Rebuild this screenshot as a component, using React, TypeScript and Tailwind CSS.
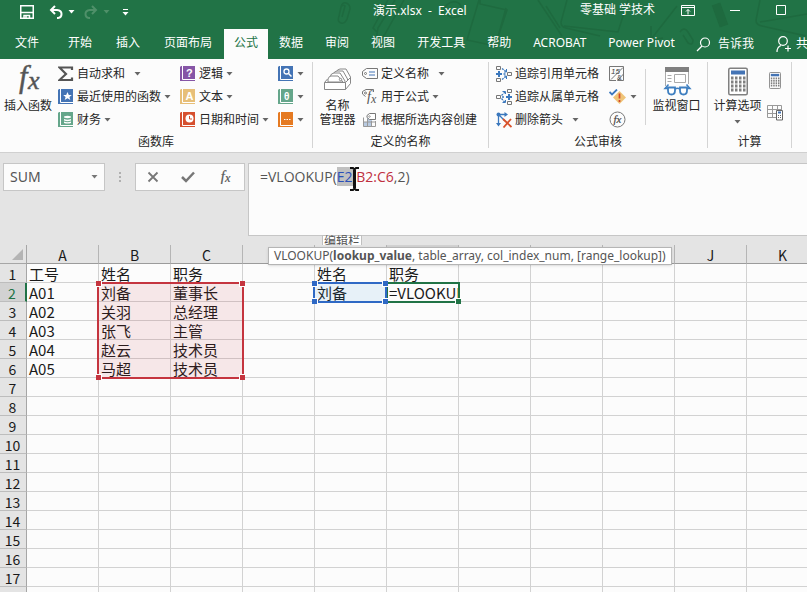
import React from "react";

const tabs = ["文件", "开始", "插入", "页面布局", "公式", "数据", "审阅", "视图", "开发工具", "帮助", "ACROBAT", "Power Pivot"];
const columns = ["A", "B", "C", "D", "E", "F", "G", "H", "I", "J", "K"];

// Cell contents, one array per sheet row
const sheet: Record<number, string[]> = {
  1: ["工号", "姓名", "职务", "", "姓名", "职务"],
  2: ["A01", "刘备", "董事长", "", "刘备", "=VLOOKUP(E2,B2:C6,2)"],
  3: ["A02", "关羽", "总经理"],
  4: ["A03", "张飞", "主管"],
  5: ["A04", "赵云", "技术员"],
  6: ["A05", "马超", "技术员"],
};

/* ---------- small drawing helpers ---------- */

const Arrow = ({ className = "" }: { className?: string }) => (
  <svg width="7" height="4" viewBox="0 0 7 4" className={"shrink-0 " + className}>
    <path d="M0.5 0h6L3.5 3.5z" fill="currentColor" />
  </svg>
);

const Fx = ({ size, className = "" }: { size: number; className?: string }) => (
  <svg width={size} height={size} viewBox="0 0 30 30" className={"overflow-visible " + className}>
    <text x="7" y="22" fontSize="27" fontStyle="italic" fontFamily="Liberation Serif, serif" fill="currentColor" stroke="currentColor" strokeWidth="0.4">f</text>
    <text x="15" y="24" fontSize="23" fontStyle="italic" fontFamily="Liberation Serif, serif" fill="currentColor" stroke="currentColor" strokeWidth="0.4">x</text>
  </svg>
);

const Book = ({ color, children }: { color: string; children: React.ReactNode }) => (
  <svg width="16" height="16" viewBox="0 0 16 16" className="shrink-0">
    <path d="M1 0h14v15H0V1z" fill={color} />
    <path d="M2.500 0v13.500H15" fill="none" stroke="#fff" />
    {children}
  </svg>
);

const Sigma = () => (
  <svg width="16" height="16" viewBox="0 0 16 16" className="shrink-0">
    <path d="M14 4V1.5H1.5L8 8l-6.5 6H14v-2.5" fill="none" stroke="#555" strokeWidth="2.2" />
  </svg>
);

const NameManager = () => (
  <svg width="30" height="26" viewBox="0 0 30 26" fill="#fff" stroke="#888" strokeWidth="1">
    <path d="M13 6q1-4 4-4h6l4.500 8v6" />
    <path d="M10 8q1-4 4-4h6l4.500 8v5" />
    <path d="M7 10q1-4 4-4h6l5 8v3H7z" />
    <path d="M5 15v-3q1-3 3-3h7l5 6z" />
    <circle cx="17.500" cy="12.500" r="1.200" />
    <path d="m1.500 15.500 3-3.500M22.500 22.500l5-6v-6l-5 5z" />
    <path d="M1.500 15.500h21v7h-21z" />
  </svg>
);

const DefineName = () => (
  <svg width="16" height="16" viewBox="0 0 16 16" fill="none" stroke="#777" className="shrink-0">
    <path d="M4.500 2.500h11v10h-11L.500 9.500v-4z" />
    <circle cx="3.500" cy="7.500" r="1" />
    <path d="M7 6h6M7 9h6" stroke="#4474b5" strokeWidth="1.200" />
  </svg>
);

const UseInFormula = () => (
  <svg width="16" height="16" viewBox="0 0 16 16" fill="none" stroke="#777" className="shrink-0 overflow-visible">
    <path d="M3.500 7.500.500 5V2.500L4 .500h7.500V3" />
    <circle cx="3.500" cy="4" r="1" />
    <text x="5" y="12" fontSize="14" fontStyle="italic" fontFamily="Liberation Serif, serif" fill="#555" stroke="none">f</text>
    <text x="9" y="14" fontSize="12" fontStyle="italic" fontFamily="Liberation Serif, serif" fill="#555" stroke="none">x</text>
  </svg>
);

const FromSelection = () => (
  <svg width="16" height="16" viewBox="0 0 16 16" fill="none" stroke="#999" className="shrink-0">
    <path d="M5 6h5v9H5zM1 10h4v4.500H1z" fill="#b9cbe2" stroke="none" />
    <path d="M1.500 5.500v9h12V9M1.500 10h12M5.500 7v7.500M9.500 9v5.500" />
    <path d="M7.500 1.500h6v6h-6L5 5.500V3.500z" fill="#fff" stroke="#777" />
    <circle cx="7.500" cy="4.500" r=".8" />
  </svg>
);

const TracePrecedents = () => (
  <svg width="16" height="16" viewBox="0 0 16 16" fill="none" stroke="#777" className="shrink-0">
    <path d="M.500.500h4v3h-4zM.500 12.500h4v3h-4zM11.500 6.500h4v3h-4z" />
    <path d="M0 8h6M3 5v6" stroke="#3b78bd" strokeWidth="2" />
    <path d="M6 2.500 10 5.500M6 13.500l4-3M7.500 8h3" stroke="#3b78bd" strokeDasharray="2 1" strokeWidth="1.300" />
    <path d="M10.500 3v3H8M10.500 13v-3H8" stroke="#3b78bd" />
  </svg>
);

const TraceDependents = () => (
  <svg width="16" height="16" viewBox="0 0 16 16" fill="none" stroke="#777" className="shrink-0">
    <path d="M.500 6.500h4v3h-4zM11.500.500h4v3h-4zM11.500 12.500h4v3h-4z" />
    <path d="M10 8h6M13 5v6" stroke="#3b78bd" strokeWidth="2" />
    <path d="M5.500 6.500 9 3M5.500 9.500l3.500 4M6 8h3" stroke="#3b78bd" strokeDasharray="2 1" strokeWidth="1.300" />
    <path d="M6.500 2.500h3V5M6.500 13.500h3V11" stroke="#3b78bd" />
  </svg>
);

const RemoveArrows = () => (
  <svg width="16" height="16" viewBox="0 0 16 16" fill="none" className="shrink-0">
    <path d="M2.500 2.500v10M2.500 2.500H10M2.500 2.500 9 9" stroke="#3b78bd" strokeWidth="1.300" />
    <path d="M0 11h5l-2.500 3.500zM8.500 0v5L12 2.500z" fill="#3b78bd" />
    <circle cx="2.500" cy="2.500" r="2" fill="#3b78bd" />
    <path d="m7 7 8.500 8M15 7l-7.500 8.500" stroke="#d9532c" strokeWidth="1.800" />
  </svg>
);

const ShowFormulas = () => (
  <svg width="16" height="16" viewBox="0 0 16 16" fill="none" stroke="#777">
    <path d="M7 14.500H.500V.500h14V14M2 13.500 14 1.500M14.500 8v6.500h-6z" />
    <text x="2" y="7.500" fontSize="8" fontStyle="italic" fontFamily="Liberation Sans" fill="#444" stroke="none">15</text>
    <text x="8" y="13.500" fontSize="7" fontFamily="Liberation Sans" fill="#444" stroke="none">&amp;</text>
  </svg>
);

const ErrorCheck = () => (
  <svg width="18" height="16" viewBox="0 0 18 16" fill="none">
    <path d="M10.500 2 17 8.500 10.500 15 4 8.500z" fill="#efc478" />
    <path d="M10.500 4.500v5M10.500 11v2" stroke="#d2452a" strokeWidth="1.700" />
    <path d="M.500 3 3 5.500 8 .500" stroke="#3b78bd" strokeWidth="1.800" />
  </svg>
);

const Evaluate = () => (
  <svg width="17" height="17" viewBox="0 0 17 17" fill="none" stroke="#777">
    <circle cx="8.500" cy="8.500" r="7.500" />
    <text x="4.500" y="11.500" fontSize="11" fontStyle="italic" fontFamily="Liberation Serif, serif" fill="#444" stroke="#444" strokeWidth="0.200">fx</text>
  </svg>
);

const WatchWindow = () => (
  <svg width="30" height="30" viewBox="0 0 30 30" fill="none" stroke="#aaa">
    <path d="M3.500 20V1.500h23V18" fill="#fff" />
    <path d="M3 1h24v5H3z" fill="#808080" stroke="none" />
    <path d="M12.500 8.500h11v8h-11zM5.500 9.500h4M5.500 12.500h4M5.500 15.500h4" />
    <g stroke="#3f7fc0" strokeWidth="1.800">
      <path d="M6 21.500h7v3q0 4-3.500 4T6 24.500zM18 21.500h7v3q0 4-3.500 4T18 24.500z" fill="#fff" />
      <path d="M13 23q2.500-1.500 5 0M6 22.500H3l3.500-4M25 22.500h3l-3.500-4" strokeWidth="1.500" />
    </g>
  </svg>
);

const Calculator = ({ width, height }: { width: number; height: number }) => (
  <svg width={width} height={height} viewBox="0 0 20 28" fill="none">
    <rect x="0.750" y="0.750" width="18.500" height="26.500" rx="1.500" fill="#fff" stroke="#808080" strokeWidth="1.500" />
    <rect x="3" y="3" width="14" height="4" fill="#4474b5" />
    {[9, 13, 17, 21].map((y) =>
      [3, 7, 11, 15].map((x) => <rect key={x + "-" + y} x={x} y={y} width="2.500" height="3" fill="#808080" />)
    )}
  </svg>
);

const CalcSheet = () => (
  <svg width="16" height="16" viewBox="0 0 16 16" fill="none" stroke="#999">
    <path d="M.500.500h14v12H.500zM.500 4.500h14M.500 8.500h9M5.500.500v12M10.500.500v12" />
    <path d="M9.500 5.500h6v9.500h-6z" fill="#fff" stroke="#666" />
    <path d="M11 7.500h3" stroke="#4474b5" strokeWidth="2" />
    <path d="M11 10.500h3M11 12.500h3" strokeDasharray="1 1" stroke="#666" />
  </svg>
);

// Faint stationery pattern behind the title bar
const Doodles = () => (
  <svg className="absolute right-0 top-0" width="480" height="59" viewBox="327 0 480 59" fill="none" stroke="#1e6a3f" strokeWidth="1.500">
    <path d="M341 7q1-5 5-4t4 6l-3 10q-2 5-6 4t-2-7l2-9q2-3 4-1l-3 11M395 0l-17 28-3 18 10-12 19-34M388 0l-15 28 4 4" />
    <path d="M480 0v4l27 6-12 36-28-6 12-40M506 8l-10 36-4-1M442 12q6-12 14-10t4 14l-8 2zM538 0l24 36M546 6l14 22" />
    <path d="m567 0-6 22q0 5 5 6l34 8M564 26l54 6 10-32M652 38l25-32M651 26v14l12-2M680 32q4-6 8 0l5 8q0 6-5 3l-5-8M760 0l-4 20q0 5 6 6l44 10M760 22l47-8" />
    <path d="m716 4 8 22" strokeWidth="9" />
  </svg>
);

/* ---------- ribbon pieces ---------- */

interface CommandProps {
  icon: React.ReactNode;
  label?: string;
  arrow?: boolean;
  wide?: boolean;
  title?: string;
}

const Command = ({ icon, label, arrow, wide, title }: CommandProps) => (
  <button title={title} className="flex h-[23px] items-center gap-[3px] whitespace-nowrap">
    {icon}
    {label && <span>{label}</span>}
    {arrow && <Arrow className={wide ? "ml-1.5 text-[#666]" : "text-[#666]"} />}
  </button>
);

const Group = ({ name, className, children }: { name: string; className: string; children: React.ReactNode }) => (
  <section aria-label={name} className={"flex shrink-0 flex-col " + className}>
    <div className="flex h-[71px] items-start">{children}</div>
    <div className="text-center leading-5">{name}</div>
  </section>
);

const Divider = () => <div className="h-[86px] w-px shrink-0 bg-[#d4d4d4]" />;

const Handles = ({ color }: { color: string }) => (
  <>
    <i className={"absolute -left-[3px] -top-[3px] size-[6px] border-b border-r border-white " + color} />
    <i className={"absolute -right-[3px] -top-[3px] size-[6px] border-b border-l border-white " + color} />
    <i className={"absolute -bottom-[3px] -left-[3px] size-[6px] border-r border-t border-white " + color} />
    <i className={"absolute -bottom-[3px] -right-[3px] size-[6px] border-l border-t border-white " + color} />
  </>
);

const tabClass = (tab: string, index: number) => {
  if (tab === "公式") return "bg-[#fcfcfc] px-2.5 text-[#217346]";
  if (tab === "文件") return "mr-[5px] px-3";
  return index < 4 ? "px-3" : "px-[11px]";
};

const Header = () => (
  <header className="relative h-[59px] overflow-hidden bg-[#217346] text-white">
    <Doodles />
    <div className="relative flex h-[29px] items-start whitespace-nowrap">
      <div className="flex h-6 w-[373px] shrink-0 items-center pl-5">
        <button title="保存">
          <svg width="14" height="14" viewBox="0 0 14 14" fill="none" stroke="#fff" strokeWidth="1.500">
            <path d="M.750.750h12.500v12.500H.750zM1 7.500h12M4 13v-2.500h5.500V13M6 11v2" />
          </svg>
        </button>
        <button title="撤消" className="ml-[15px] flex items-center gap-[5px]">
          <svg width="14" height="14" viewBox="0 0 14 14" fill="none" stroke="#fff" strokeWidth="2">
            <path d="M6 1 2 5l4 4M2 5h6q4.500.500 4.500 4T9 13H8" />
          </svg>
          <Arrow />
        </button>
        <button title="恢复" className="ml-[9px] flex items-center gap-[5px] text-[#4f9069]">
          <svg width="14" height="14" viewBox="0 0 14 14" fill="none" stroke="currentColor" strokeWidth="2">
            <path d="m8 1 4 4-4 4M12 5H6q-4.500.500-4.500 4T5 13h1" />
          </svg>
          <Arrow />
        </button>
        <button title="自定义快速访问工具栏" className="ml-3">
          <svg width="7" height="7" viewBox="0 0 7 7" fill="#fff">
            <path d="M1 0h5v1H1zM.500 3h6l-3 3.500z" />
          </svg>
        </button>
      </div>
      <h1 className="whitespace-pre leading-[22px]">演示.xlsx  -  Excel</h1>
      <div className="ml-auto flex h-5 items-center pr-[21px]">
        <span>零基础 学技术</span>
        <button title="功能区显示选项" className="ml-[26px]">
          <svg width="14" height="11" viewBox="0 0 14 11" fill="none" stroke="#fff">
            <path d="M.500.500h13v10H.500zM1 2.500h12M7 9.500V4.500M5 6.500l2-2 2 2" />
          </svg>
        </button>
        <button title="最小化" className="ml-[35px]">
          <svg width="10" height="10" viewBox="0 0 10 10" stroke="#fff"><path d="M0 5.500h10" /></svg>
        </button>
        <button title="最大化" className="ml-9">
          <svg width="10" height="10" viewBox="0 0 10 10" fill="none" stroke="#fff"><path d="M.500.500h9v9h-9z" /></svg>
        </button>
      </div>
    </div>
    <nav className="relative flex h-[30px] items-stretch whitespace-nowrap pl-[3px]">
      {tabs.map((tab, i) => (
        <button key={tab} className={"shrink-0 pb-0.5 " + tabClass(tab, i)}>
          {tab}
        </button>
      ))}
      <button className="ml-2.5 flex shrink-0 items-center gap-[7px]">
        <svg width="15" height="15" viewBox="0 0 15 15" fill="none" stroke="#fff" strokeWidth="1.200">
          <circle cx="9" cy="5.500" r="4.500" />
          <path d="m6 9-5 5" />
        </svg>
        告诉我
      </button>
      <button className="ml-[22px] flex shrink-0 items-center gap-1">
        <svg width="16" height="16" viewBox="0 0 16 16" fill="none" stroke="#fff" strokeWidth="1.200">
          <circle cx="7" cy="5" r="4.300" />
          <path d="M1 16q0-5 4-6.500M12 9.500v6M9 12.500h6" />
        </svg>
        共享
      </button>
    </nav>
  </header>
);

const Ribbon = () => (
  <div className="flex h-[94px] overflow-hidden whitespace-nowrap border-b border-[#d0d0d0] bg-[#fcfcfc] pt-[3px] text-[#262626]">
    <Group name="函数库" className="w-[312px]">
      <button className="flex w-14 shrink-0 flex-col items-center">
        <Fx size={34} className="text-[#555]" />
        <span className="leading-5">插入函数</span>
      </button>
      <div className="w-[122px] shrink-0 pl-0.5">
        <Command icon={<Sigma />} label="自动求和" arrow wide />
        <Command
          icon={<Book color="#4474b5"><path d="m9.500 3 1.300 3h3l-2.400 2 .900 3-2.800-1.800L6.700 11l.900-3-2.400-2h3z" fill="#fff" /></Book>}
          label="最近使用的函数"
          arrow
        />
        <Command
          icon={<Book color="#65a68b"><path d="M6 4.500q3.500-1.500 7 0v1q-3.500 1.500-7 0zM6 7q3.500 1.500 7 0v1.500q-3.500 1.500-7 0zM6 9.500q3.500 1.500 7 0V11q-3.500 1-7 0z" fill="#fff" /></Book>}
          label="财务"
          arrow
        />
      </div>
      <div className="w-[98px] shrink-0 pl-0.5">
        <Command
          icon={<Book color="#8655a6"><text x="6" y="11" fontSize="11" fontWeight="700" fontFamily="Liberation Sans" fill="#fff">?</text></Book>}
          label="逻辑"
          arrow
        />
        <Command
          icon={<Book color="#e7bf79"><text x="5.500" y="11" fontSize="11" fontWeight="700" fontFamily="Liberation Sans" fill="#fff">A</text></Book>}
          label="文本"
          arrow
        />
        <Command
          icon={<Book color="#d6502f"><circle cx="9.500" cy="6.500" r="4" fill="#fff" /><path d="M9.500 4v3h2.500" stroke="#d6502f" fill="none" /></Book>}
          label="日期和时间"
          arrow
        />
      </div>
      <div className="pl-0.5">
        <Command title="查找与引用" icon={<Book color="#4474b5"><circle cx="8.500" cy="5.500" r="2.500" fill="none" stroke="#fff" strokeWidth="1.300" /><path d="m10.500 7.500 3 3" stroke="#fff" strokeWidth="1.500" /></Book>} arrow />
        <Command title="数学和三角函数" icon={<Book color="#65a68b"><text x="6" y="10.500" fontSize="10" fontWeight="700" fontFamily="Liberation Sans" fill="#fff">θ</text></Book>} arrow />
        <Command title="其他函数" icon={<Book color="#e57a22"><path d="M6 7.500h1.500M8.500 7.500H10M11 7.500h1.500" stroke="#fff" /></Book>} arrow />
      </div>
    </Group>
    <Divider />
    <Group name="定义的名称" className="w-[175px]">
      <button className="flex w-[49px] shrink-0 flex-col items-center pt-[5px] leading-[14px]">
        <NameManager />
        <span className="mt-1.5">名称</span>
        <span>管理器</span>
      </button>
      <div>
        <Command icon={<DefineName />} label="定义名称" arrow wide />
        <Command icon={<UseInFormula />} label="用于公式" arrow />
        <Command icon={<FromSelection />} label="根据所选内容创建" />
      </div>
    </Group>
    <Divider />
    <Group name="公式审核" className="w-[218px]">
      <div className="w-[120px] shrink-0 pl-[7px]">
        <Command icon={<TracePrecedents />} label="追踪引用单元格" />
        <Command icon={<TraceDependents />} label="追踪从属单元格" />
        <Command icon={<RemoveArrows />} label="删除箭头" arrow wide />
      </div>
      <div className="w-9 shrink-0">
        <Command title="显示公式" icon={<ShowFormulas />} />
        <Command title="错误检查" icon={<ErrorCheck />} arrow />
        <Command title="公式求值" icon={<Evaluate />} />
      </div>
      <div className="mt-[7px] h-14 w-px shrink-0 bg-[#d4d4d4]" />
      <button className="flex w-[61px] shrink-0 flex-col items-center pt-1">
        <WatchWindow />
        <span className="leading-5">监视窗口</span>
      </button>
    </Group>
    <Divider />
    <Group name="计算" className="w-[83px]">
      <button className="flex w-[59px] shrink-0 flex-col items-center pt-[5px]">
        <Calculator width={20} height={29} />
        <span className="leading-5">计算选项</span>
        <Arrow className="mt-1 text-[#666]" />
      </button>
      <div className="flex flex-col items-center gap-4 pt-[10px]">
        <button title="开始计算" className="block"><Calculator width={12} height={17} /></button>
        <button title="计算工作表" className="block"><CalcSheet /></button>
      </div>
    </Group>
    <Divider />
  </div>
);

const FormulaBar = () => (
  <div className="flex items-start pl-[3px] pt-[10px] text-[#555]">
    <div className="flex h-7 w-[102px] shrink-0 items-center border border-[#c6c6c6] bg-[#fcfcfc] pr-1.5">
      <input aria-label="名称框" defaultValue="SUM" className="w-full min-w-0 bg-transparent pl-1.5 text-sm outline-none" />
      <button title="名称列表"><Arrow className="text-[#777]" /></button>
    </div>
    <svg width="30" height="28" viewBox="0 0 30 28" className="shrink-0" fill="#b0b0b0">
      <path d="M14 9h2v2h-2zM14 13h2v2h-2zM14 17h2v2h-2z" />
    </svg>
    <div className="flex h-7 w-[110px] shrink-0 items-center justify-around border border-[#c6c6c6] bg-[#fcfcfc] text-[#777]">
      <button title="取消">
        <svg width="12" height="12" viewBox="0 0 12 12" stroke="currentColor" strokeWidth="1.800"><path d="m1.500 1.500 9 9M10.500 1.500l-9 9" /></svg>
      </button>
      <button title="输入">
        <svg width="14" height="12" viewBox="0 0 14 12" fill="none" stroke="currentColor" strokeWidth="2.500"><path d="m1 6 4 4 8-8.500" /></svg>
      </button>
      <button title="插入函数"><Fx size={16} className="text-[#555]" /></button>
    </div>
    <div className="relative ml-[3px] h-[73px] flex-1 whitespace-nowrap border border-r-0 border-[#c6c6c6] bg-[#fcfcfc] pl-[11px] pt-[3px]">
      <div role="textbox" aria-label="编辑栏" contentEditable suppressContentEditableWarning className="font-['Open_Sans',sans-serif] text-sm leading-5 outline-none">
        =VLOOKUP(<span className="bg-[#c0c0c0] text-[#2a4fb8]">E2</span>,<span className="text-[#c0303f]">B2:C6</span>,2)
      </div>
      <svg className="absolute left-[100px] top-[3px]" width="11" height="24" viewBox="0 0 11 24" fill="none" stroke="#111" strokeWidth="2">
        <path d="M1 1h3l1.500 1.500L7 1h3M5.500 2v20M1 23h3l1.500-1.500L7 23h3" />
        <path d="M5.500 3v18" strokeWidth="3" />
      </svg>
      <div className="absolute left-[73px] top-[71px] h-5 border border-[#c0c0c0] bg-white px-px text-xs leading-3">编辑栏</div>
    </div>
  </div>
);

const Grid = () => (
  <div className="relative mt-[9px]">
    <table className="w-[819px] table-fixed border-separate border-spacing-0 bg-[#fcfcfc] font-['Noto_Sans_CJK_SC',sans-serif] text-[15px] text-[#1a1a1a]">
      <thead>
        <tr className="h-[19px] bg-[#e4e4e4]">
          <th className="w-[27px] border-b border-r border-[#a6a6a6] p-0">
            <svg width="11" height="11" viewBox="0 0 11 11" className="ml-auto mr-[3px] mt-px" fill="#b4b4b4"><path d="M11 0v11H0z" /></svg>
          </th>
          {columns.map((c) => (
            <th
              key={c}
              scope="col"
              className={
                "h-[19px] w-[72px] border-b border-r border-b-[#9b9b9b] border-r-[#b5b5b5] p-0 pt-0.5 text-sm font-normal leading-4 " +
                (c === "F" ? "bg-[#d2d2d2] text-[#217346]" : "")
              }
            >
              {c}
            </th>
          ))}
        </tr>
      </thead>
      <tbody>
        {Array.from({ length: 18 }, (_, i) => i + 1).map((row) => (
          <tr key={row} className="h-[19px]">
            <th
              scope="row"
              className={
                "border-b border-b-[#bdbdbd] p-0 pr-px pt-0.5 text-sm font-normal leading-4 " +
                (row === 2 ? "border-r-2 border-r-[#217346] bg-[#d2d2d2] text-[#217346]" : "border-r border-r-[#a6a6a6] bg-[#e4e4e4]")
              }
            >
              {row}
            </th>
            {columns.map((c, i) => (
              <td key={c} className="h-[19px] overflow-hidden whitespace-nowrap border-b border-r border-[#d2d2d2] p-0 pl-0.5 pt-0.5 leading-4">
                {sheet[row]?.[i]}
              </td>
            ))}
          </tr>
        ))}
      </tbody>
    </table>

    {/* Range outlines: lookup table, lookup value, cell being edited */}
    <div className="absolute left-[97px] top-[37px] h-[97px] w-[147px] border-2 border-[#c5353f] bg-[#c5353f]/10">
      <Handles color="bg-[#c5353f]" />
    </div>
    <div className="absolute left-[386px] top-[37px] h-[21px] w-[74px] border-2 border-[#217346]">
      <i className="absolute -bottom-[3px] -right-[3px] size-[6px] border-l border-t border-white bg-[#217346]" />
    </div>
    <div className="absolute left-[313px] top-[37px] h-[21px] w-[74px] border-2 border-[#2f69c5] bg-[#2f8fd5]/10">
      <Handles color="bg-[#2f69c5]" />
    </div>

    <div role="tooltip" className="absolute left-[268px] top-[2px] whitespace-nowrap border border-[#b5b5b5] bg-white px-[5px] text-xs leading-4 text-[#555] shadow-sm">
      VLOOKUP(<b>lookup_value</b>, table_array, col_index_num, [range_lookup])
    </div>
  </div>
);

export default function App() {
  return (
    <div className="h-screen overflow-hidden bg-[#e4e4e4] font-['Noto_Sans','Noto_Sans_CJK_SC',sans-serif] text-xs">
      <Header />
      <Ribbon />
      <FormulaBar />
      <Grid />
    </div>
  );
}
